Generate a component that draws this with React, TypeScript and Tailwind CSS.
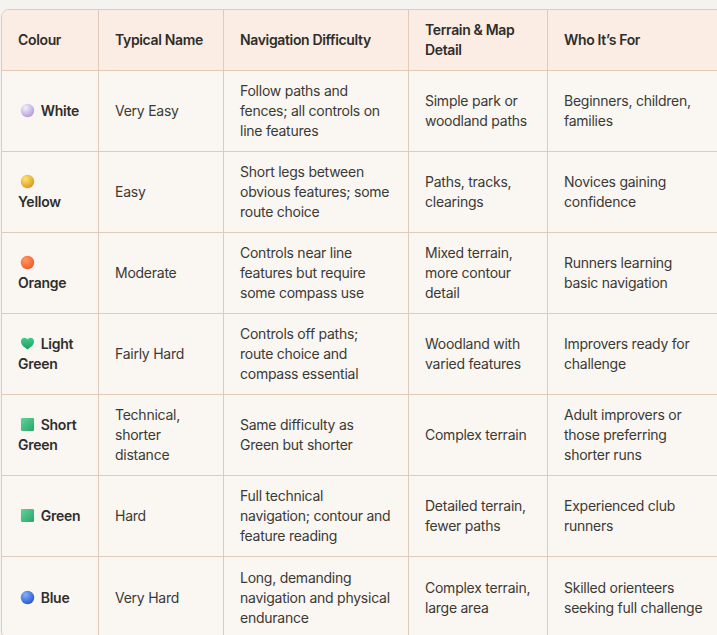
import React from "react";

type Row = {
  icon: React.ReactNode;
  colour: string;
  name: string;
  nav: string;
  terrain: string;
  who: string;
};

function Ball({ from, to }: { from: string; to: string }) {
  return (
    <svg width="15" height="15" viewBox="0 0 16 16" className="inline-block align-[-2px]">
      <defs>
        <radialGradient id={`g${from}`} cx="35%" cy="30%" r="75%">
          <stop offset="0%" stopColor={from} />
          <stop offset="100%" stopColor={to} />
        </radialGradient>
      </defs>
      <circle cx="8" cy="8" r="7.2" fill={`url(#g${from})`} />
    </svg>
  );
}

function Square() {
  return (
    <svg width="15" height="15" viewBox="0 0 16 16" className="inline-block align-[-2px]">
      <defs>
        <linearGradient id="sq" x1="0" y1="0" x2="1" y2="1">
          <stop offset="0%" stopColor="#5fd49a" />
          <stop offset="100%" stopColor="#2aa56a" />
        </linearGradient>
      </defs>
      <rect x="1" y="1" width="14" height="14" rx="1.5" fill="url(#sq)" />
    </svg>
  );
}

function Heart() {
  return (
    <svg width="15" height="15" viewBox="0 0 16 16" className="inline-block align-[-2px]">
      <defs>
        <linearGradient id="ht" x1="0" y1="0" x2="0" y2="1">
          <stop offset="0%" stopColor="#3fcf86" />
          <stop offset="100%" stopColor="#1f9a63" />
        </linearGradient>
      </defs>
      <path
        d="M8 14.5C4 11.6 1 9.2 1 5.6 1 3.4 2.7 1.8 4.7 1.8c1.4 0 2.6.8 3.3 1.9.7-1.1 1.9-1.9 3.3-1.9 2 0 3.7 1.6 3.7 3.8 0 3.6-3 6-7 8.9z"
        fill="url(#ht)"
      />
    </svg>
  );
}

const rows: Row[] = [
  {
    icon: <Ball from="#f3eefc" to="#b49ad8" />,
    colour: "White",
    name: "Very Easy",
    nav: "Follow paths and fences; all controls on line features",
    terrain: "Simple park or woodland paths",
    who: "Beginners, children, families",
  },
  {
    icon: <Ball from="#ffe36a" to="#d99a1c" />,
    colour: "Yellow",
    name: "Easy",
    nav: "Short legs between obvious features; some route choice",
    terrain: "Paths, tracks, clearings",
    who: "Novices gaining confidence",
  },
  {
    icon: <Ball from="#ff9a5a" to="#ee5a32" />,
    colour: "Orange",
    name: "Moderate",
    nav: "Controls near line features but require some compass use",
    terrain: "Mixed terrain, more contour detail",
    who: "Runners learning basic navigation",
  },
  {
    icon: <Heart />,
    colour: "Light Green",
    name: "Fairly Hard",
    nav: "Controls off paths; route choice and compass essential",
    terrain: "Woodland with varied features",
    who: "Improvers ready for challenge",
  },
  {
    icon: <Square />,
    colour: "Short Green",
    name: "Technical, shorter distance",
    nav: "Same difficulty as Green but shorter",
    terrain: "Complex terrain",
    who: "Adult improvers or those preferring shorter runs",
  },
  {
    icon: <Square />,
    colour: "Green",
    name: "Hard",
    nav: "Full technical navigation; contour and feature reading",
    terrain: "Detailed terrain, fewer paths",
    who: "Experienced club runners",
  },
  {
    icon: <Ball from="#7fb0ff" to="#2857c8" />,
    colour: "Blue",
    name: "Very Hard",
    nav: "Long, demanding navigation and physical endurance",
    terrain: "Complex terrain, large area",
    who: "Skilled orienteers seeking full challenge",
  },
];

const th =
  "border-b border-r border-[#e0cbbb] px-4 py-2.5 text-left align-middle font-semibold tracking-[-0.35px]";
const td = "border-r border-[#e0cbbb] px-4 py-2.5 align-middle";

export default function App() {
  return (
    <div className="h-[635px] w-[717px] overflow-hidden bg-[#f5f3ef] pl-[1px] pt-[9px] font-['Inter',sans-serif] text-[14px] leading-5 tracking-[-0.25px] text-[#3b3a36]">
      <div className="w-[724px] overflow-hidden rounded-lg border border-[#e0cbbb] bg-[#faf6f2]">
        <table className="w-full table-fixed border-separate border-spacing-0">
          <colgroup>
            <col className="w-[97px]" />
            <col className="w-[125px]" />
            <col className="w-[185px]" />
            <col className="w-[139px]" />
            <col />
          </colgroup>
          <thead className="bg-[#fbede3] text-[#2f2e2b]">
            <tr>
              <th className={th}>Colour</th>
              <th className={th}>Typical Name</th>
              <th className={th}>Navigation Difficulty</th>
              <th className={th}>Terrain &amp; Map Detail</th>
              <th className={th + " border-r-0"}>Who It’s For</th>
            </tr>
          </thead>
          <tbody>
            {rows.map((r, i) => {
              const last = i === rows.length - 1;
              const b = last ? "" : " border-b";
              return (
                <tr key={r.colour} className="h-[81px]">
                  <td className={td + b}>
                    <span className="mr-[2px] pl-[2px]">{r.icon}</span>{" "}
                    <span className="font-semibold text-[#2f2e2b]">{r.colour}</span>
                  </td>
                  <td className={td + b}>{r.name}</td>
                  <td className={td + b}>{r.nav}</td>
                  <td className={td + b}>{r.terrain}</td>
                  <td className={td + b + " border-r-0"}>{r.who}</td>
                </tr>
              );
            })}
          </tbody>
        </table>
      </div>
    </div>
  );
}
